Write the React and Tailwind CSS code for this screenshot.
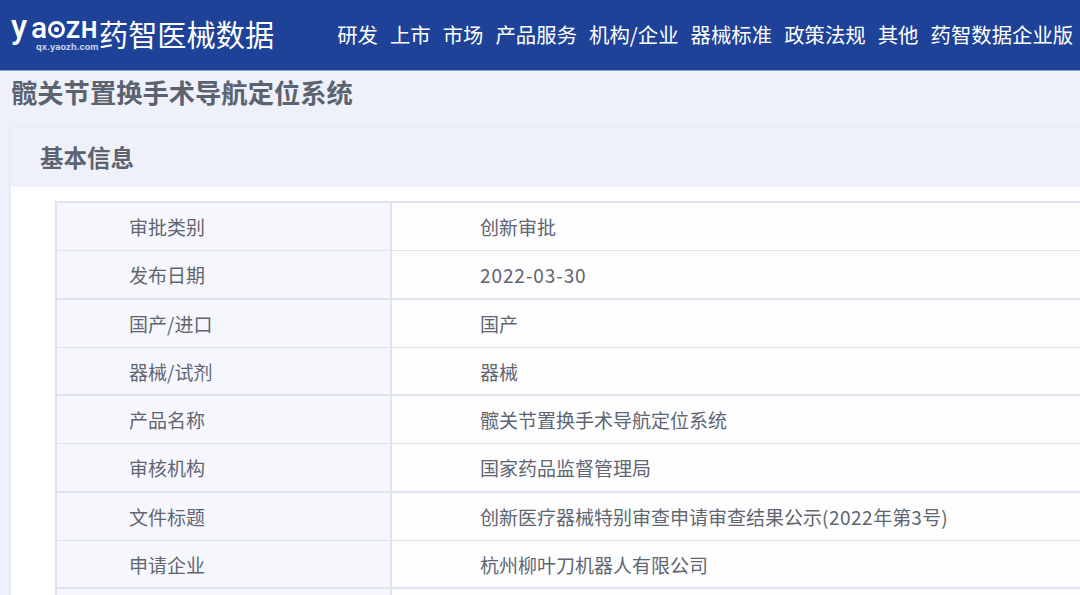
import React from 'react';

const navItems = ['研发', '上市', '市场', '产品服务', '机构/企业', '器械标准', '政策法规', '其他', '药智数据企业版'];

const rows = [
  ['审批类别', '创新审批'],
  ['发布日期', <span className="tracking-[0.9px]">2022-03-30</span>],
  ['国产/进口', '国产'],
  ['器械/试剂', '器械'],
  ['产品名称', '髋关节置换手术导航定位系统'],
  ['审核机构', '国家药品监督管理局'],
  ['文件标题', <>创新医疗器械特别审查申请审查结果公示<span className="tracking-[0.5px]">(2022</span>年第<span className="tracking-[0.5px]">3</span>号<span className="tracking-[0.5px]">)</span></>],
  ['申请企业', '杭州柳叶刀机器人有限公司'],
  ['', ''],
];

const cjk = { fontFamily: '"Noto Sans CJK SC", sans-serif' };

const Logo = () => (
  <div className="flex items-center pb-[2px]">
    <div className="relative w-[88px] h-[46px] text-white">
      <div className="flex items-baseline h-[32px] font-['Roboto',sans-serif] leading-[32px]">
        <span className="w-[20px] text-[33px] font-medium">y</span>
        <span className="w-[17px] text-[30px] font-medium">a</span>
        {/* the o in the logo is a ring with a dot */}
        <span className="block w-[17px] h-[17px] mr-[1px] rounded-full border-[3px] border-white">
          <span className="block w-[5px] h-[5px] m-[3px] rounded-full bg-white"></span>
        </span>
        <span className="text-[23px] leading-[20px] font-bold tracking-[1px]">ZH</span>
      </div>
      <div className="absolute left-[25px] top-[31px] text-[9px] leading-none font-bold text-[#c9d3ea] font-['Inter',sans-serif] whitespace-nowrap">qx.yaozh.com</div>
    </div>
    <div className="text-[29.2px] leading-none text-white whitespace-nowrap" style={cjk}>药智医械数据</div>
  </div>
);

const App = () => {
  return (
    <div className="w-[1080px] h-[595px] overflow-hidden bg-[#eef1fa] text-[#5f6672]" style={cjk}>
      {/* Header */}
      <header className="flex items-center h-[71px] pl-[11px] bg-[#1e4297] border-b border-[#8b9fd0]">
        <Logo />
        <nav className="flex gap-[12px] ml-[63px] pb-[2px] text-[20.4px] leading-none text-white whitespace-nowrap">
          {navItems.map(item => (
            <span key={item}>{item}</span>
          ))}
        </nav>
      </header>

      {/* Product title */}
      <h1 className="h-[57px] pl-[11px] pt-[6px] text-[26.3px] leading-[30px] font-bold text-[#5b6370] whitespace-nowrap">髋关节置换手术导航定位系统</h1>

      {/* Basic info card */}
      <section className="ml-[11px] rounded-tl-md bg-white shadow-[0_0_6px_#dfe5f7]">
        <h2 className="flex items-center h-[59px] pl-[29px] rounded-tl-md bg-[#eef1fa] text-[23.5px] leading-none font-bold text-[#5b6370]">基本信息</h2>
        <div className="ml-[44px] mt-[14px] border-t-2 border-l-2 border-[#dfe3f1]">
          {rows.map(([label, value], i) => (
            <div key={i} className={`flex h-[48.3px] text-[19px] leading-none ${i % 2 === 1 ? 'border-b-2' : 'border-b'} border-[#dfe3f1]`}>
              <div className="flex items-center w-[335px] pl-[72px] bg-[#f6f7fc] border-r-2 border-[#dfe3f1]">{label}</div>
              <div className="flex items-center flex-1 pl-[88px] bg-[#fdfdfe]">{value}</div>
            </div>
          ))}
        </div>
      </section>
    </div>
  );
};

export default App;
